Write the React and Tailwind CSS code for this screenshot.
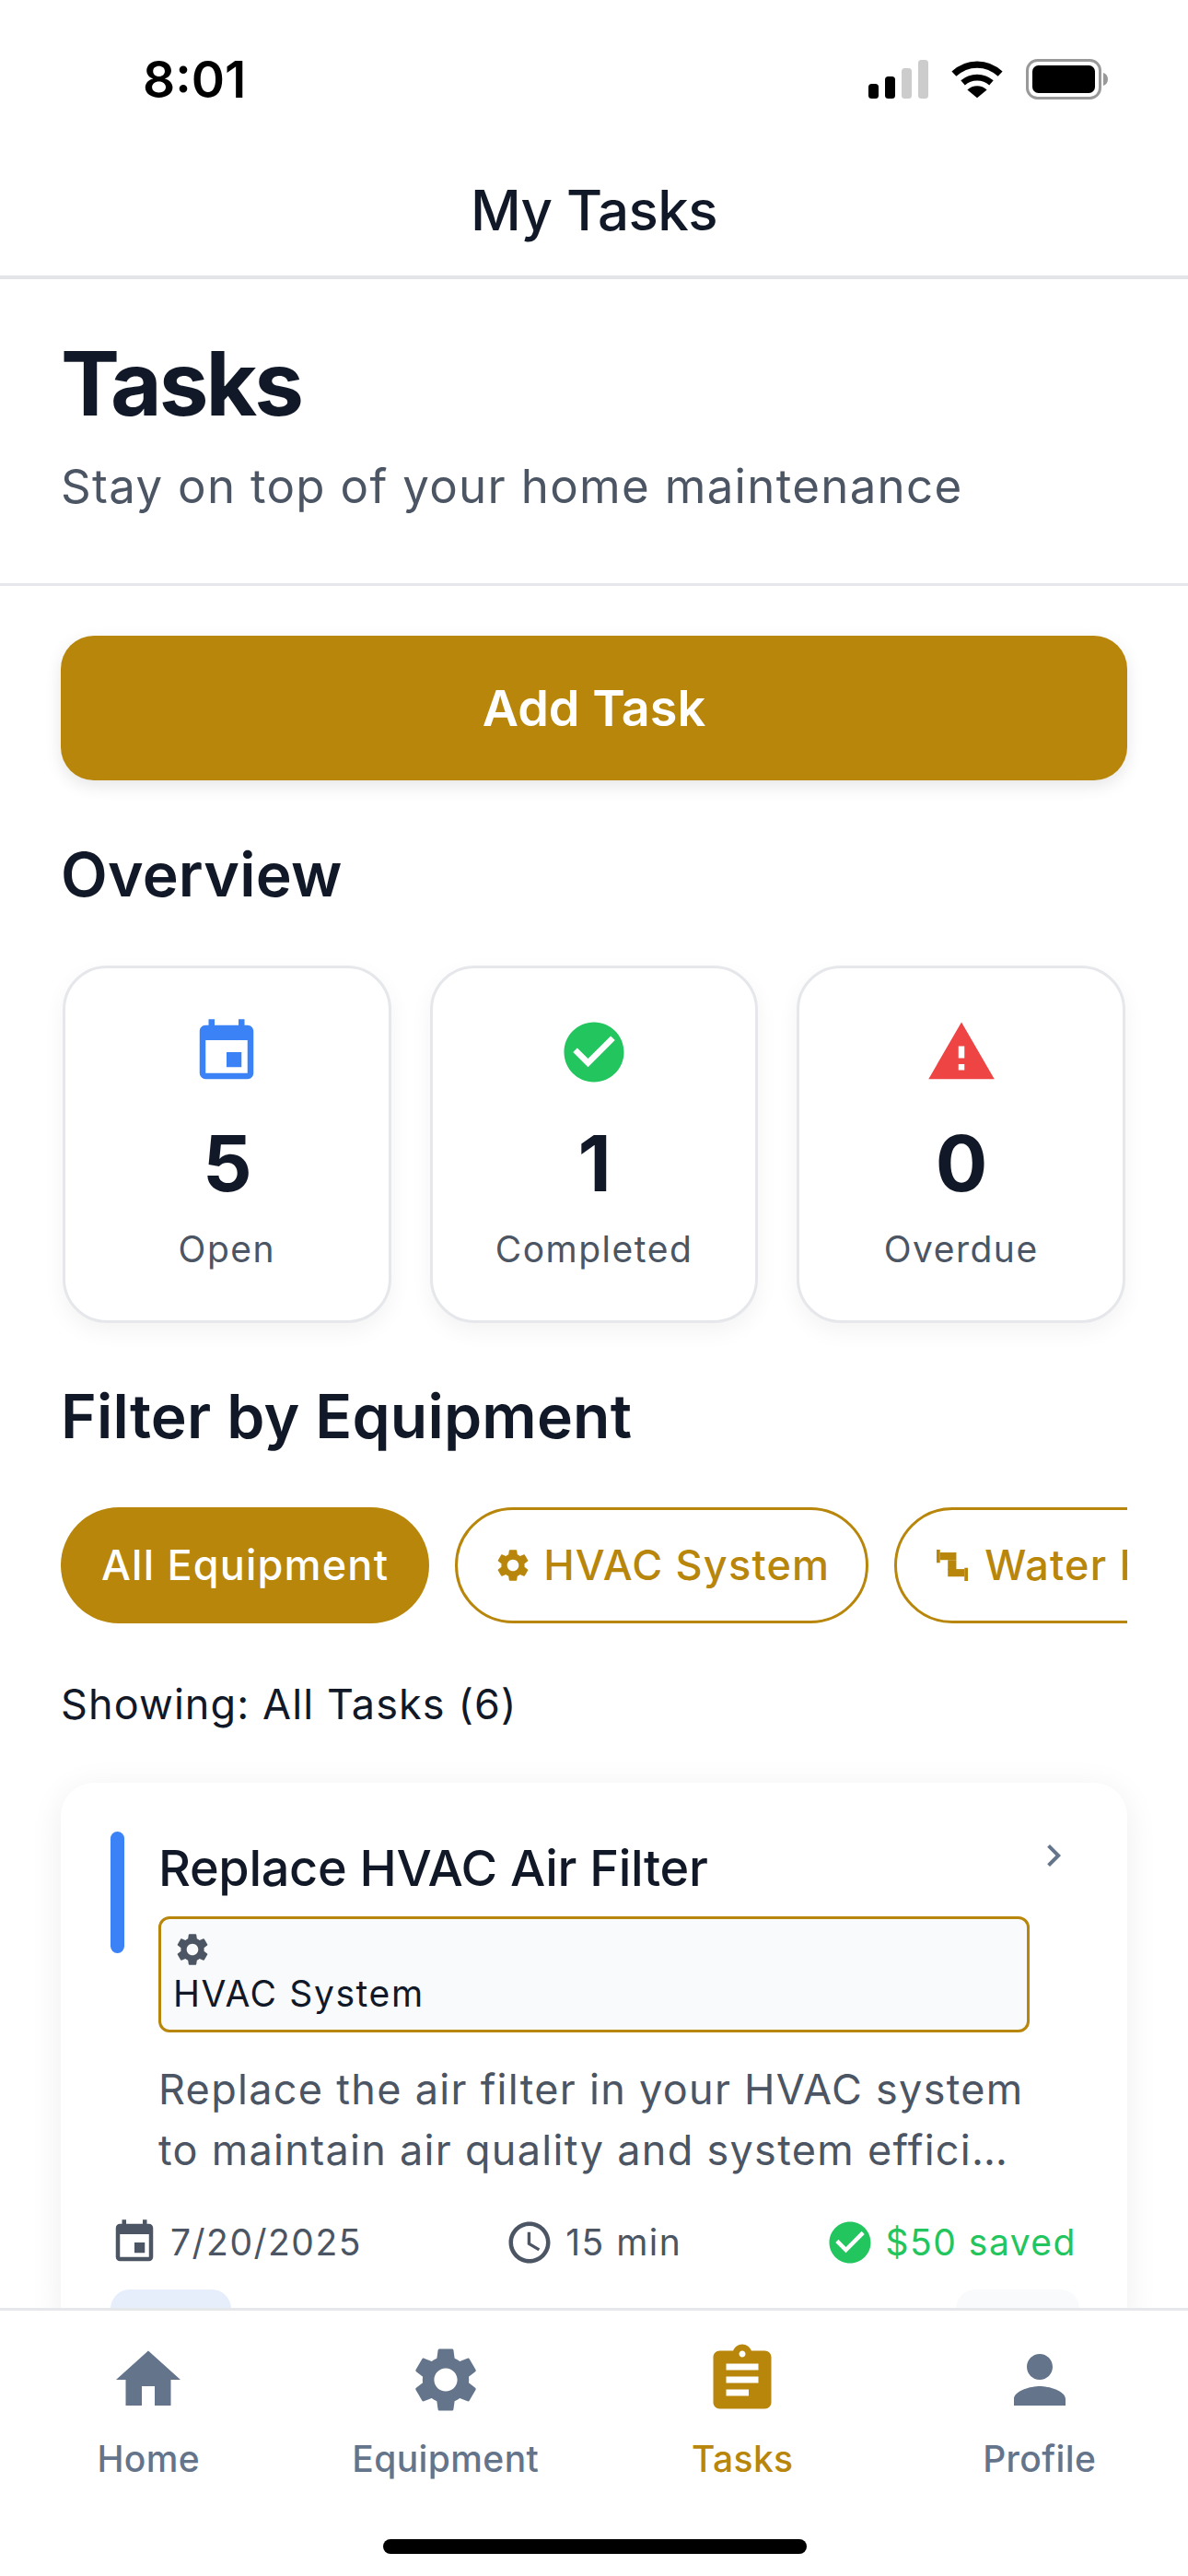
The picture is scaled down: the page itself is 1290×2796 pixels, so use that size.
import { MdEvent, MdCheckCircle, MdWarning, MdSettings, MdHome, MdAssignment, MdPerson, MdAccessTime, MdChevronRight } from 'react-icons/md';

const PipeIcon = ({ className }) => (
  <svg viewBox="0 0 100 100" fill="currentColor" className={className}>
    <rect x="0" y="0" width="11" height="42" />
    <rect x="11" y="9" width="52" height="24" />
    <rect x="36" y="33" width="27" height="32" />
    <rect x="36" y="62" width="53" height="24" />
    <rect x="89" y="58" width="11" height="42" />
  </svg>
);

const StatCard = ({ icon: Icon, iconClass, value, label }) => (
  <div className="flex-1 h-[388px] bg-white border-[3px] border-[#e5e7eb] rounded-[48px] shadow-[0_9px_24px_rgba(0,0,0,0.05)] flex flex-col items-center pt-[52px]">
    <Icon className={`w-[78px] h-[78px] ${iconClass}`} />
    <div className="mt-[34px] text-[84px] leading-[96px] font-bold tracking-[-1px] text-[#111827]">{value}</div>
    <div className="mt-[18px] text-[39px] leading-[54px] tracking-[1.5px] text-[#4b5563]">{label}</div>
  </div>
);

const NavItem = ({ icon: Icon, label, active }) => (
  <div className={`flex-1 flex flex-col items-center ${active ? 'text-[#b8860b]' : 'text-[#64748b]'}`}>
    <Icon className="w-[84px] h-[84px]" />
    <span className="mt-[18px] text-[39px] leading-[51px] font-medium tracking-[0.4px]">{label}</span>
  </div>
);

const App = () => {
  return (
    <div className="relative w-[1290px] h-[2796px] bg-white flex flex-col overflow-hidden font-['Inter',sans-serif] text-[#111827]">
      {/* Status bar */}
      <div className="h-[156px] pl-[155px] pr-[86px] flex items-center justify-between shrink-0 pt-[16px]">
        <span className="text-[55px] font-semibold text-black">8:01</span>
        <div className="flex items-center gap-[25px]">
          <svg width="65" height="42" viewBox="0 0 65 42">
            <rect x="0" y="26" width="11" height="16" rx="3.5" fill="#000" />
            <rect x="18" y="18" width="11" height="24" rx="3.5" fill="#000" />
            <rect x="36" y="9" width="11" height="33" rx="3.5" fill="#ccc" />
            <rect x="54" y="0" width="11" height="42" rx="3.5" fill="#ccc" />
          </svg>
          <svg width="56" height="42" viewBox="0 0 58 42">
            <path d="M3 15 C18 1 40 1 55 15" fill="none" stroke="#000" strokeWidth="7.5" />
            <path d="M13 25 C22 17 36 17 45 25" fill="none" stroke="#000" strokeWidth="7" />
            <path d="M18 33 C24 27 34 27 40 33 L29 42 Z" fill="#000" />
          </svg>
          <svg width="90" height="44" viewBox="0 0 90 44">
            <rect x="1.500" y="1.500" width="79" height="41" rx="11" fill="none" stroke="#999" strokeWidth="3" />
            <rect x="7" y="7" width="68" height="30" rx="6.500" fill="#000" />
            <path d="M84 15c3 1 5 3.500 5 7s-2 6-5 7z" fill="#999" />
          </svg>
        </div>
      </div>

      {/* Header */}
      <div className="h-[147px] shrink-0 bg-white border-b-[4px] border-[#e2e4e8] flex items-center justify-center">
        <h1 className="text-[60px] font-medium tracking-[-0.6px]">My Tasks</h1>
      </div>

      <div className="flex-1 min-h-0 overflow-hidden">
        {/* Title block */}
        <div className="h-[333px] px-[66px] pt-[56px] border-b-[3px] border-[#e5e7eb]">
          <h2 className="text-[96px] leading-[114px] font-bold tracking-[-3px]">Tasks</h2>
          <p className="mt-[19px] text-[51px] leading-[72px] tracking-[1.3px] text-[#4b5563]">Stay on top of your home maintenance</p>
        </div>

        <div className="px-[66px] pt-[54px]">
          <button className="w-full h-[157px] rounded-[36px] bg-[#b8860b] text-white text-[54px] font-semibold shadow-[0_6px_18px_rgba(0,0,0,0.1)]">Add Task</button>

          <h3 className="mt-[60px] text-[66px] leading-[84px] font-semibold tracking-[0.2px]">Overview</h3>

          <div className="mt-[57px] flex gap-[42px] px-[2px]">
            <StatCard icon={MdEvent} iconClass="text-[#3b82f6]" value="5" label="Open" />
            <StatCard icon={MdCheckCircle} iconClass="text-[#22c55e]" value="1" label="Completed" />
            <StatCard icon={MdWarning} iconClass="text-[#ef4444]" value="0" label="Overdue" />
          </div>

          <h3 className="mt-[59px] text-[66px] leading-[84px] font-semibold tracking-[0.2px]">Filter by Equipment</h3>

          {/* Filter chips */}
          <div className="mt-[57px] flex gap-[28px] overflow-hidden">
            <div className="shrink-0 h-[126px] px-[44px] rounded-full bg-[#b8860b] text-white text-[45px] tracking-[1.2px] font-medium flex items-center">All Equipment</div>
            <div className="shrink-0 h-[126px] px-[39px] rounded-full border-[3px] border-[#b8860b] text-[#b8860b] text-[45px] tracking-[1.2px] font-medium flex items-center gap-[12px]">
              <MdSettings className="w-[42px] h-[42px]" />
              HVAC System
            </div>
            <div className="shrink-0 h-[126px] px-[39px] rounded-full border-[3px] border-[#b8860b] text-[#b8860b] text-[45px] tracking-[1.2px] font-medium flex items-center gap-[18px]">
              <PipeIcon className="w-[34px] h-[34px] ml-[4px]" />
              Water Heater
            </div>
          </div>

          <p className="mt-[61px] text-[45px] leading-[54px] tracking-[1.1px]">Showing: All Tasks (6)</p>

          {/* Task card */}
          <div className="mt-[58px] h-[600px] bg-white rounded-[36px] shadow-[0_6px_36px_rgba(0,0,0,0.07)] px-[54px] pt-[53px]">
            <div className="flex">
              <div className="w-[15px] h-[132px] rounded-full bg-[#3b82f6] shrink-0" />
              <div className="ml-[37px] flex-1 min-w-0 pt-[7px]">
                <div className="text-[54px] leading-[66px] font-medium tracking-[-0.3px]">Replace HVAC Air Filter</div>
                <div className="mt-[19px] h-[126px] border-[3px] border-[#b8860b] rounded-[12px] bg-[#f8fafc] px-[13px] pt-[12px]">
                  <MdSettings className="w-[42px] h-[42px] text-[#4b5563]" />
                  <div className="mt-[3px] text-[39px] leading-[48px] tracking-[1.6px]">HVAC System</div>
                </div>
                <p className="mt-[29px] text-[45px] leading-[66px] tracking-[1.3px] text-[#4b5563]">Replace the air filter in your HVAC system<br />to maintain air quality and system effici…</p>
              </div>
              <MdChevronRight className="w-[48px] h-[48px] text-[#64748b] ml-[2px] mr-[2px] mt-[2px] shrink-0" />
            </div>
            <div className="mt-[40px] h-[54px] flex items-center justify-between -ml-[1px] mr-[1px]">
              <div className="flex items-center gap-[12px] text-[39px] tracking-[1.5px] text-[#4b5563]"><MdEvent className="w-[54px] h-[54px]" />7/20/2025</div>
              <div className="flex items-center gap-[12px] text-[39px] tracking-[1.5px] text-[#4b5563]"><MdAccessTime className="w-[54px] h-[54px]" />15 min</div>
              <div className="flex items-center gap-[12px] text-[39px] tracking-[1.5px] text-[#22c55e]"><MdCheckCircle className="w-[54px] h-[54px]" />$50 saved</div>
            </div>
            <div className="mt-[24px] flex justify-between -mr-[2px]">
              <div className="w-[131px] h-[60px] rounded-[21px] bg-[#e6eefc]" />
              <div className="w-[134px] h-[60px] rounded-[21px] bg-[#f8fafc]" />
            </div>
          </div>
        </div>
      </div>

      {/* Tab bar */}
      <div className="h-[291px] shrink-0 bg-white border-t-[3px] border-[#e5e7eb] flex items-start pt-[33px]">
        <NavItem icon={MdHome} label="Home" />
        <NavItem icon={MdSettings} label="Equipment" />
        <NavItem icon={MdAssignment} label="Tasks" active />
        <NavItem icon={MdPerson} label="Profile" />
      </div>

      {/* Home indicator */}
      <div className="absolute left-[416px] bottom-[24px] w-[460px] h-[16px] rounded-full bg-black" />
    </div>
  );
};

export default App;
